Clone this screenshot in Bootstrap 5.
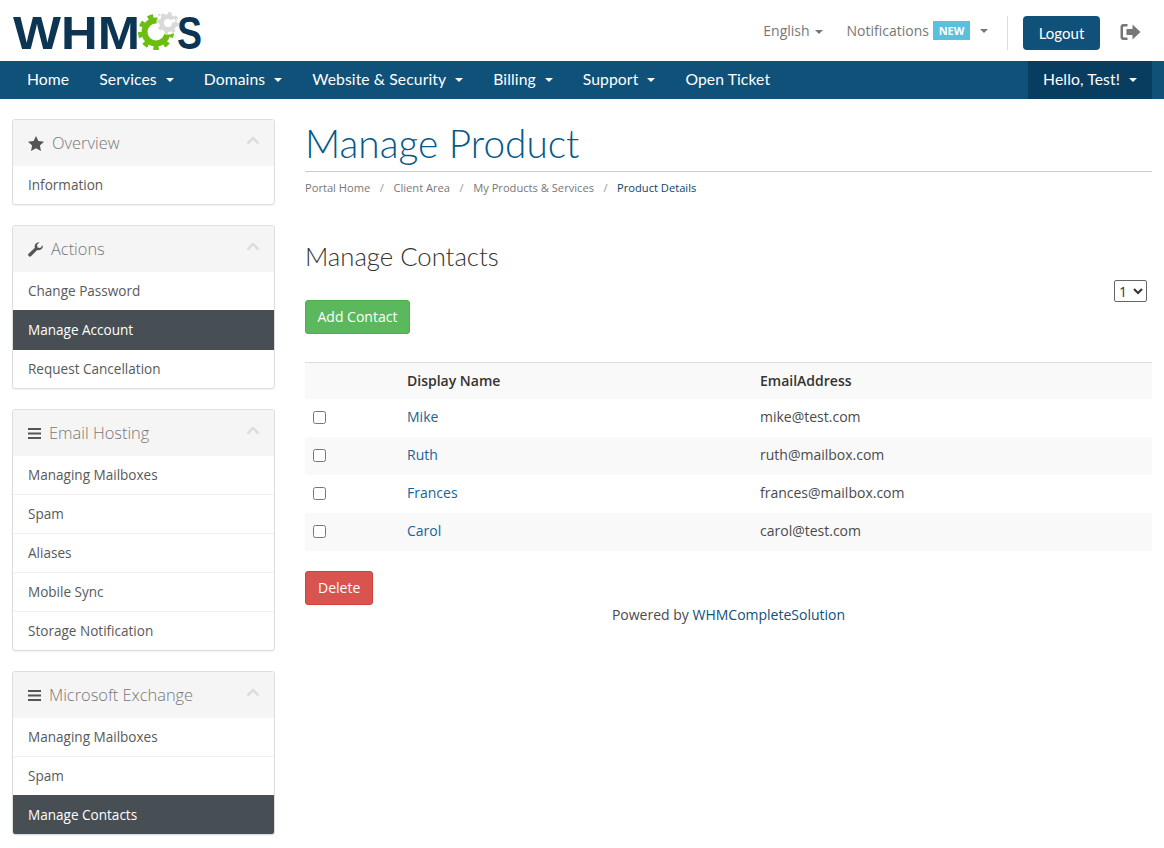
<!DOCTYPE html>
<html lang="en">
<head>
  <meta charset="UTF-8">
  <meta name="viewport" content="width=device-width, initial-scale=1.0">
  <title>Manage Product</title>
  <link href="https://cdn.jsdelivr.net/npm/bootstrap@5.3.3/dist/css/bootstrap.min.css" rel="stylesheet">
  <style>
    body { font-family: "Open Sans", sans-serif; font-size: 14px; color: #333; background: #fff; }
    a { text-decoration: none; }
    .top-head { height: 61px; padding: 0 12px 0 13px; }
    .logo-text { font-family: "Liberation Sans", sans-serif; font-weight: 700; font-size: 47px; fill: #0b3553; }
    .top-link { color: #777; font-size: 14px; }
    .caret-dn { display: inline-block; width: 0; height: 0; border-left: 4px solid transparent; border-right: 4px solid transparent; border-top: 4px solid currentColor; vertical-align: middle; }
    .new-tag { background: #5bc0de; color: #fff; font-size: 11px; font-weight: 700; height: 19px; width: 37px; text-align: center; line-height: 19px; display: inline-block; }
    .head-sep { width: 1px; height: 34px; background: #ddd; margin: 4px 15px 0 19px; }
    .logout-btn { background: #0f5179; color: #fff; border-radius: 4px; height: 34px; width: 77px; font-family: Lato, sans-serif; font-size: 15px; line-height: 34px; text-align: center; padding: 0; border: 0; margin-top: 4px; }
    .exit-ic { margin: 2px 11px 0 20px; }
    .main-nav { background: #0f5179; height: 38px; padding: 0 12px; font-family: Lato, sans-serif; font-size: 15.7px; letter-spacing: .1px; }
    .main-nav a { color: #fff; display: flex; align-items: center; height: 38px; padding: 0 15px; }
    .main-nav a .caret-dn { margin-left: 9px; border-left-width: 4.5px; border-right-width: 4.5px; }
    .main-nav a.hello { background: #083d5f; }
    .page-wrap { padding: 20px 12px 0; gap: 30px; }
    .side-col { width: 263px; flex: none; }
    .main-col { flex: 1; min-width: 0; }
    .side-box { border: 1px solid #ddd; border-radius: 3px; margin-bottom: 20px; box-shadow: 0 1px 1px rgba(0,0,0,.05); overflow: hidden; }
    .side-head { background: #f5f5f5; height: 46px; padding: 0 14px 0 15px; color: #777; font-size: 16.4px; font-weight: 300; gap: 8px; }
    .side-head svg.ic { fill: #555; flex: none; }
    .side-head .chev { margin-left: auto; margin-top: -6px; }
    .side-item { display: block; height: 39px; line-height: 38px; padding: 0 15px; color: #58595b; font-size: 13.55px; border-top: 1px solid #f0f0f0; }
    .side-item:first-of-type, .side-item.on + .side-item { border-top: 0; height: 38px; }
    .side-item.on { background: #484f54; color: #fff; height: 40px; line-height: 40px; border-top: 0; }
    .side-item.on:last-child { height: 39px; }
    .page-title { font-family: Lato, sans-serif; font-size: 38.8px; font-weight: 300; color: #05598b; line-height: 38px; margin: 5px 0 0; padding-bottom: 9px; border-bottom: 1px solid #ccc; }
    .crumbs { font-size: 11.15px; margin: 9px 0 0; padding: 0; list-style: none; color: #777; height: 14px; line-height: 14px; }
    .crumbs li + li::before { content: "/"; padding: 0 9.5px; color: #999; }
    .crumbs a { color: #777; }
    .crumbs .now { color: #0b4468; }
    .sec-title { font-family: Lato, sans-serif; font-size: 25.7px; font-weight: 300; margin: 47px 0 0; color: #333; line-height: 28px; }
    .add-row { margin-top: 30px; height: 62px; }
    .act-btn { height: 34px; line-height: 32px; padding: 0 12px; font-size: 14px; color: #fff; border-radius: 3px; border-width: 1px; border-style: solid; }
    .btn-add { background: #5cb85c; border-color: #4cae4c; padding: 0 11.5px; }
    .btn-del { background: #d9534f; border-color: #d43f3a; margin-top: 20px; }
    .num-select { font-size: 14px; height: 22px; width: 33px; margin: -20px 5px 0 0; background: #fff; border: 1px solid #666; border-radius: 2px; color: #333; font-family: "Open Sans", sans-serif; padding: 0; }
    .contact-table { width: 100%; border-top: 1px solid #ddd; border-collapse: collapse; }
    .contact-table th, .contact-table td { height: 38px; padding: 0 8px; font-size: 14px; vertical-align: middle; }
    .contact-table td { color: #4a4a4a; }
    .contact-table td + td { padding-bottom: 2px; }
    .contact-table th { font-weight: 600; height: 36px; }
    .contact-table th.chk-col { width: 94px; }
    .contact-table th.name-col { width: 353px; }
    .contact-table tr.alt { background: #f9f9f9; }
    .contact-table a { color: #176596; }
    .contact-table input { display: block; width: 13px; height: 13px; margin: 0; }
    .foot-line { text-align: center; margin-top: -1px; color: #4a4a4a; }
    .foot-line a { color: #0f5179; }
  </style>
</head>
<body>
  <header class="top-head d-flex align-items-center">
    <a href="#" class="d-block">
      <svg class="d-block" width="200" height="60" viewBox="0 0 200 60">
        <text class="logo-text" x="0" y="48" textLength="127" lengthAdjust="spacingAndGlyphs">WHM</text>
        <!-- green gear, teeth are a dashed stroke -->
        <circle cx="143" cy="31" r="11.5" fill="none" stroke="#6bbe10" stroke-width="6"/>
        <circle cx="143" cy="31" r="16" fill="none" stroke="#6bbe10" stroke-width="4" pathLength="100" stroke-dasharray="5.500 5.600"/>
        <!-- grey gear sits in the opening of the green one -->
        <circle cx="155" cy="22" r="11.500" fill="#fff"/>
        <circle cx="155" cy="22" r="6.500" fill="none" stroke="#d9d9d9" stroke-width="5"/>
        <circle cx="155" cy="22" r="9.500" fill="none" stroke="#d9d9d9" stroke-width="3" pathLength="100" stroke-dasharray="6 6.500"/>
        <path d="M155 22l7-3" stroke="#fff" stroke-width="3"/>
        <text class="logo-text" x="164" y="48" textLength="25" lengthAdjust="spacingAndGlyphs">S</text>
      </svg>
    </a>
    <div class="ms-auto d-flex align-items-center">
      <a href="#" class="top-link">English<span class="caret-dn" style="margin-left:5px"></span></a>
      <a href="#" class="top-link d-flex align-items-center ms-4">Notifications <span class="new-tag ms-1">NEW</span> <span class="caret-dn" style="margin-left:10px"></span></a>
      <span class="head-sep"></span>
      <button class="logout-btn">Logout</button>
      <svg class="exit-ic" width="21" height="18" viewBox="0 0 21 18"><path fill="#777" d="M7.500 1H3.500A3 3 0 0 0 .5 4v10a3 3 0 0 0 3 3h4v-2.500H4a1 1 0 0 1-1-1v-9a1 1 0 0 1 1-1h3.500z"/><path fill="#777" d="M6.500 6h6V1.500L20.500 9l-8 7.500V12h-6z"/></svg>
    </div>
  </header>

  <nav class="main-nav d-flex">
    <a href="#">Home</a>
    <a href="#">Services <span class="caret-dn"></span></a>
    <a href="#">Domains <span class="caret-dn"></span></a>
    <a href="#">Website &amp; Security <span class="caret-dn"></span></a>
    <a href="#">Billing <span class="caret-dn"></span></a>
    <a href="#">Support <span class="caret-dn"></span></a>
    <a href="#">Open Ticket</a>
    <a href="#" class="hello ms-auto">Hello, Test! <span class="caret-dn"></span></a>
  </nav>

  <div class="page-wrap d-flex">
    <aside class="side-col">
      <div class="side-box">
        <div class="side-head d-flex align-items-center">
          <svg class="ic" width="16" height="15" viewBox="0 0 16 15"><path d="M8 0l2.400 5 5.600.7-4.100 3.800 1.100 5.500L8 12.300 3 15l1.100-5.500L0 5.700 5.600 5z"/></svg>
          <span>Overview</span>
          <svg class="chev" width="14" height="9" viewBox="0 0 14 9"><path d="M1.500 7.500L7 2l5.500 5.500" fill="none" stroke="#ddd" stroke-width="2.500"/></svg>
        </div>
        <a href="#" class="side-item">Information</a>
      </div>
      <div class="side-box">
        <div class="side-head d-flex align-items-center">
          <svg class="ic" width="15" height="15" viewBox="0 0 15 15"><path d="M14.800 3.300a4.200 4.200 0 0 1-5.600 4.600L3 14.300a1.800 1.800 0 0 1-2.500-2.500L6.900 5.700A4.200 4.200 0 0 1 11.500.2L9 2.800l.5 2.600 2.700.5z"/></svg>
          <span>Actions</span>
          <svg class="chev" width="14" height="9" viewBox="0 0 14 9"><path d="M1.500 7.500L7 2l5.500 5.500" fill="none" stroke="#ddd" stroke-width="2.500"/></svg>
        </div>
        <a href="#" class="side-item">Change Password</a>
        <a href="#" class="side-item on">Manage Account</a>
        <a href="#" class="side-item">Request Cancellation</a>
      </div>
      <div class="side-box">
        <div class="side-head d-flex align-items-center">
          <svg class="ic" width="13" height="11" viewBox="0 0 13 11"><path d="M0 0h13v2H0zM0 4.500h13v2H0zM0 9h13v2H0z"/></svg>
          <span>Email Hosting</span>
          <svg class="chev" width="14" height="9" viewBox="0 0 14 9"><path d="M1.500 7.500L7 2l5.500 5.500" fill="none" stroke="#ddd" stroke-width="2.500"/></svg>
        </div>
        <a href="#" class="side-item">Managing Mailboxes</a>
        <a href="#" class="side-item">Spam</a>
        <a href="#" class="side-item">Aliases</a>
        <a href="#" class="side-item">Mobile Sync</a>
        <a href="#" class="side-item">Storage Notification</a>
      </div>
      <div class="side-box">
        <div class="side-head d-flex align-items-center">
          <svg class="ic" width="13" height="11" viewBox="0 0 13 11"><path d="M0 0h13v2H0zM0 4.500h13v2H0zM0 9h13v2H0z"/></svg>
          <span>Microsoft Exchange</span>
          <svg class="chev" width="14" height="9" viewBox="0 0 14 9"><path d="M1.500 7.500L7 2l5.500 5.500" fill="none" stroke="#ddd" stroke-width="2.500"/></svg>
        </div>
        <a href="#" class="side-item">Managing Mailboxes</a>
        <a href="#" class="side-item">Spam</a>
        <a href="#" class="side-item on">Manage Contacts</a>
      </div>
    </aside>

    <main class="main-col">
      <h1 class="page-title">Manage Product</h1>
      <ol class="crumbs d-flex">
        <li><a href="#">Portal Home</a></li>
        <li><a href="#">Client Area</a></li>
        <li><a href="#">My Products &amp; Services</a></li>
        <li class="now">Product Details</li>
      </ol>
      <h2 class="sec-title">Manage Contacts</h2>
      <div class="add-row d-flex justify-content-between align-items-start">
        <a href="#" class="act-btn btn-add d-block">Add Contact</a>
        <select class="num-select"><option>1</option></select>
      </div>
      <table class="contact-table">
        <thead>
          <tr class="alt"><th class="chk-col"></th><th class="name-col">Display Name</th><th>EmailAddress</th></tr>
        </thead>
        <tbody>
          <tr><td><input type="checkbox"></td><td><a href="#">Mike</a></td><td>mike@test.com</td></tr>
          <tr class="alt"><td><input type="checkbox"></td><td><a href="#">Ruth</a></td><td>ruth@mailbox.com</td></tr>
          <tr><td><input type="checkbox"></td><td><a href="#">Frances</a></td><td>frances@mailbox.com</td></tr>
          <tr class="alt"><td><input type="checkbox"></td><td><a href="#">Carol</a></td><td>carol@test.com</td></tr>
        </tbody>
      </table>
      <a href="#" class="act-btn btn-del d-inline-block">Delete</a>
      <p class="foot-line">Powered by <a href="#">WHMCompleteSolution</a></p>
    </main>
  </div>

  <script src="https://cdn.jsdelivr.net/npm/bootstrap@5.3.3/dist/js/bootstrap.bundle.min.js"></script>
</body>
</html>
